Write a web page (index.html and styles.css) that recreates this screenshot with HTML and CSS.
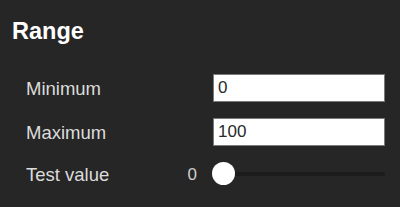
FILE: index.html
```html
<!DOCTYPE html>
<html lang="en">

<head>
    <meta charset="UTF-8">
    <meta name="viewport" content="width=device-width, initial-scale=1.0">
    <title>Range</title>
    <link rel="stylesheet" href="styles.css">
</head>

<body>
    <div class="panel">
        <h2 class="titulo">Range</h2>

        <div class="campos">
            <label for="minimo" class="rotulo">Minimum</label>
            <span class="valor"></span>
            <input type="text" id="minimo" class="caixa" value="0">

            <label for="maximo" class="rotulo">Maximum</label>
            <span class="valor"></span>
            <input type="text" id="maximo" class="caixa" value="100">

            <label for="teste" class="rotulo">Test value</label>
            <span class="valor" id="saida">0</span>
            <input type="range" id="teste" class="slider" min="0" max="100" value="0">
        </div>
    </div>
</body>

</html>
```

FILE: styles.css
```css
body {
    margin: 0;
    background-color: #262626;
    font-family: "Liberation Sans", Arial, sans-serif;
    height: 207px;
    overflow: hidden;
}

.panel {
    padding: 17px 15px 0 12px;
}

.titulo {
    margin: 0;
    color: #ffffff;
    font-size: 23.5px;
    font-weight: bold;
    line-height: 28px;
}

.campos {
    display: grid;
    grid-template-columns: 1fr auto 172px;
    align-items: center;
    row-gap: 16px;
    margin-top: 29px;
    padding-left: 14px;
}

.rotulo {
    color: #dcdcdc;
    font-size: 18.5px;
    padding-top: 2px;
}

.valor {
    color: #cfcfcf;
    font-size: 17px;
    padding-right: 16px;
    padding-top: 2px;
}

.caixa {
    box-sizing: border-box;
    height: 28px;
    width: 172px;
    margin: 0;
    padding: 0 4px;
    border: 1px solid #7a7a7a;
    background-color: #ffffff;
    color: #2a2a2a;
    font-family: "Liberation Sans", Arial, sans-serif;
    font-size: 17px;
}

.slider {
    -webkit-appearance: none;
    appearance: none;
    width: 173px;
    height: 24px;
    margin: 0 0 0 -1px;
    background: transparent;
}

.slider::-webkit-slider-runnable-track {
    height: 4px;
    background-color: #1c1c1c;
    border-radius: 2px;
}

.slider::-webkit-slider-thumb {
    -webkit-appearance: none;
    width: 23px;
    height: 23px;
    margin-top: -10px;
    border-radius: 50%;
    background-color: #ffffff;
    border: none;
}
```
